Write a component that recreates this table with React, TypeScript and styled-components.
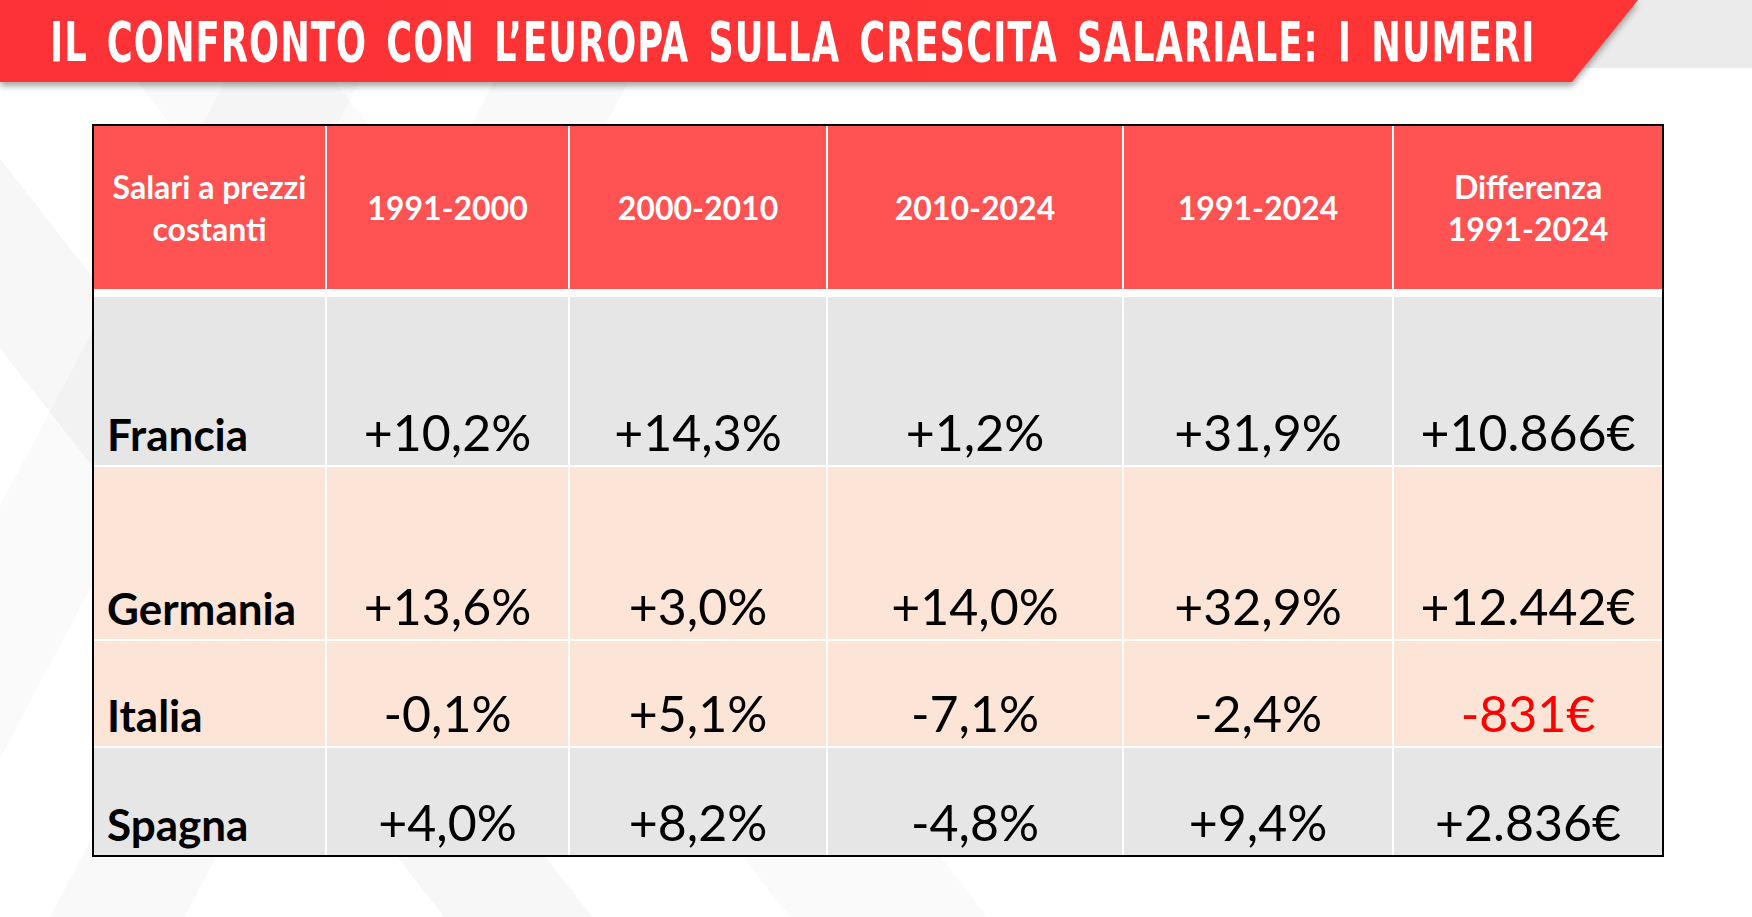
import React from 'react';
import styled, { createGlobalStyle } from 'styled-components';

const GlobalStyle = createGlobalStyle`
    html, body {
        margin: 0;
        padding: 0;
        background: #ffffff;
    }
    * {
        box-sizing: border-box;
    }
`;

// Pagina con le bande diagonali grigie sullo sfondo
const Page = styled.div`
    width: 1752px;
    height: 917px;
    overflow: hidden;
    font-family: Lato, "Open Sans", sans-serif;
    background:
        linear-gradient(#ebebeb, #ebebeb) right top / 200px 68px no-repeat,
        linear-gradient(52deg, transparent 0 18%, rgba(0, 0, 0, 0.03) 18% 24%, transparent 24% 100%),
        linear-gradient(52deg, transparent 0 32%, rgba(0, 0, 0, 0.02) 32% 40%, transparent 40% 100%),
        linear-gradient(-62deg, transparent 0 70%, rgba(0, 0, 0, 0.025) 70% 76%, transparent 76% 100%),
        linear-gradient(-62deg, transparent 0 82%, rgba(0, 0, 0, 0.02) 82% 88%, transparent 88% 100%),
        #ffffff;
`;

const BannerShadow = styled.div`
    width: 1638px;
    filter: drop-shadow(0 4px 3px rgba(0, 0, 0, 0.35));
`;

const Banner = styled.div`
    height: 82px;
    display: flex;
    align-items: center;
    padding-left: 50px;
    background: linear-gradient(90deg, #fd3236, #ff3535);
    clip-path: polygon(0 0, 100% 0, calc(100% - 66px) 100%, 0 100%);
`;

const Title = styled.h1`
    margin: 2px 0 0;
    display: inline-block;
    white-space: nowrap;
    color: #ffffff;
    font-family: "Liberation Sans Narrow", "DejaVu Sans Condensed", "Liberation Sans", sans-serif;
    font-weight: 700;
    font-size: 55px;
    line-height: 1;
    letter-spacing: 1.5px;
    word-spacing: 8px;
    transform: scaleX(0.714);
    transform-origin: left center;
`;

const TableWrap = styled.div`
    padding: 42px 0 0 92px;
`;

const Table = styled.table`
    width: 1570px;
    table-layout: fixed;
    border-collapse: separate;
    border-spacing: 0;
    border: 2px solid #000000;
`;

const HeadCell = styled.th`
    height: 171px;
    padding: 0 6px;
    background: #ff5252;
    color: #ffffff;
    font-family: Lato, sans-serif;
    font-weight: 700;
    font-size: 32px;
    line-height: 42px;
    text-align: center;
    vertical-align: middle;
    border-bottom: 8px solid #ffffff;
    border-right: 2px solid #ffffff;
    &:last-child {
        border-right: none;
    }
`;

const Row = styled.tr<{ $tone: 'grey' | 'peach'; $h: number }>`
    height: ${(p) => p.$h}px;
    td {
        background: ${(p) => (p.$tone === 'grey' ? '#e6e6e6' : '#fce4d6')};
        height: ${(p) => p.$h}px;
    }
    &:last-child td {
        border-bottom: none;
    }
`;

const Cell = styled.td<{ $neg?: boolean }>`
    padding: 0 4px 8px;
    text-align: center;
    vertical-align: bottom;
    font-family: Lato, sans-serif;
    font-size: 50px;
    line-height: 1;
    color: ${(p) => (p.$neg ? '#ff0000' : '#000000')};
    border-bottom: 2px solid #ffffff;
    border-right: 2px solid #ffffff;
    &:last-child {
        border-right: none;
    }
`;

const Country = styled.td`
    padding: 0 0 9px 13px;
    text-align: left;
    vertical-align: bottom;
    font-family: Lato, sans-serif;
    font-weight: 700;
    font-size: 44px;
    line-height: 1;
    color: #000000;
    border-bottom: 2px solid #ffffff;
    border-right: 2px solid #ffffff;
`;

const columns = [233, 243, 258, 296, 270, 268];

const headers = ['Salari a prezzi costanti', '1991-2000', '2000-2010', '2010-2024', '1991-2024'];

const rows: { name: string; tone: 'grey' | 'peach'; h: number; values: string[] }[] = [
    { name: 'Francia', tone: 'grey', h: 170, values: ['+10,2%', '+14,3%', '+1,2%', '+31,9%', '+10.866€'] },
    { name: 'Germania', tone: 'peach', h: 174, values: ['+13,6%', '+3,0%', '+14,0%', '+32,9%', '+12.442€'] },
    { name: 'Italia', tone: 'peach', h: 107, values: ['-0,1%', '+5,1%', '-7,1%', '-2,4%', '-831€'] },
    { name: 'Spagna', tone: 'grey', h: 107, values: ['+4,0%', '+8,2%', '-4,8%', '+9,4%', '+2.836€'] },
];

const App: React.FC = () => {
    return (
        <Page>
            <GlobalStyle />
            <BannerShadow>
                <Banner>
                    <Title>IL CONFRONTO CON L’EUROPA SULLA CRESCITA SALARIALE: I NUMERI</Title>
                </Banner>
            </BannerShadow>
            <TableWrap>
                <Table>
                    <colgroup>
                        {columns.map((w, i) => (
                            <col key={i} style={{ width: w }} />
                        ))}
                    </colgroup>
                    <thead>
                        <tr>
                            {headers.map((h) => (
                                <HeadCell key={h}>{h}</HeadCell>
                            ))}
                            <HeadCell>
                                Differenza
                                <br />
                                1991-2024
                            </HeadCell>
                        </tr>
                    </thead>
                    <tbody>
                        {rows.map((r) => (
                            <Row key={r.name} $tone={r.tone} $h={r.h}>
                                <Country>{r.name}</Country>
                                {r.values.map((v, i) => (
                                    <Cell key={i} $neg={v === '-831€'}>
                                        {v}
                                    </Cell>
                                ))}
                            </Row>
                        ))}
                    </tbody>
                </Table>
            </TableWrap>
        </Page>
    );
};

export default App;
